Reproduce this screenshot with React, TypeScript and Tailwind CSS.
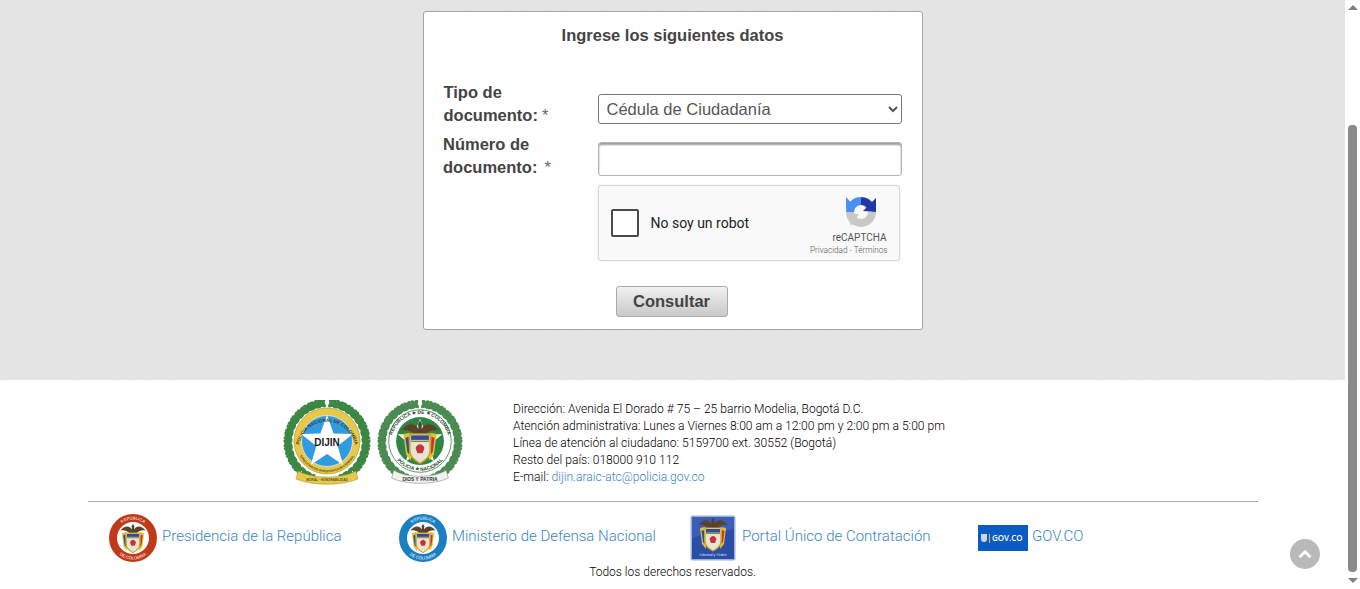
import { ChevronUp } from 'lucide-react';

const links = [
  { label: 'Presidencia de la República', logo: 'presidencia', gap: 'gap-[5px]' },
  { label: 'Ministerio de Defensa Nacional', logo: 'ministerio', gap: 'gap-[5px]' },
  { label: 'Portal Único de Contratación', logo: 'portal', gap: 'gap-[6px]' },
  { label: 'GOV.CO', logo: 'gov', gap: 'gap-[4px]' },
];

// Leaves running up both sides of an emblem
function Wreath({ color, berries }: { color: string; berries?: boolean }) {
  const angles = Array.from({ length: 15 }, (_, i) => 8 + i * 10.5);
  return (
    <g>
      <path d="M40 4 A38.5 38.5 0 0 0 17 70" fill="none" stroke={color} strokeWidth="5" />
      <path d="M48 4 A38.5 38.5 0 0 1 71 70" fill="none" stroke={color} strokeWidth="5" />
      {[1, -1].map((side) =>
        angles.map((a) => {
          const rad = (a * Math.PI) / 180;
          const x = 44 + side * 39 * Math.sin(rad);
          const y = 42 - 39 * Math.cos(rad);
          const rot = side * a;
          return (
            <g key={`${side}-${a}`}>
              <ellipse cx={x} cy={y} rx="2.5" ry="5.5" fill={color} transform={`rotate(${rot + side * 40} ${x} ${y})`} />
              <ellipse cx={x} cy={y} rx="2.5" ry="5.5" fill={color} transform={`rotate(${rot - side * 40} ${x} ${y})`} />
              {berries && Math.round(a * 2) % 3 === 0 && <circle cx={x} cy={y} r="1.3" fill="#b5354a" />}
            </g>
          );
        })
      )}
    </g>
  );
}

function Shield({ cx, cy, scale = 1 }: { cx: number; cy: number; scale?: number }) {
  return (
    <g transform={`translate(${cx} ${cy}) scale(${scale})`}>
      {/* flags */}
      <path d="M-13 -7 L-8 -8 L-7 14 L-11 9 Z" fill="#e5c02c" />
      <path d="M13 -7 L8 -8 L7 14 L11 9 Z" fill="#e5c02c" />
      <path d="M-11.5 -4 L-9 -5 L-8.5 9 L-10 7 Z" fill="#2f4f9e" />
      <path d="M11.5 -4 L9 -5 L8.5 9 L10 7 Z" fill="#c5343a" />
      {/* eagle */}
      <path d="M0 -9 C-3 -16 -9 -17 -15 -10 C-10 -11 -6 -9 -3 -6 L3 -6 C6 -9 10 -11 15 -10 C9 -17 3 -16 0 -9 Z" fill="#5f4128" />
      <path d="M-1.5 -15 L0 -18 L1.5 -15 L1 -8 H-1 Z" fill="#4a4438" />
      {/* shield */}
      <path d="M-8 -7 H8 V6 C8 11 4 14 0 16 C-4 14 -8 11 -8 6 Z" fill="#e8e4d4" stroke="#c9a21f" strokeWidth="1.2" />
      <rect x="-7" y="-6" width="14" height="5" fill="#2d4c9a" />
      <path d="M-3.5 4 C-2 0 2 0 3.5 4 L2 8 H-2 Z" fill="#c5343a" />
      <path d="M-7 -2 H7" stroke="#e5c02c" strokeWidth="1" />
    </g>
  );
}

function DijinEmblem() {
  return (
    <svg width="88" height="86" viewBox="0 0 88 86">
      <Wreath color="#3b8743" />
      <circle cx="44" cy="41" r="33" fill="#e6c84a" stroke="#a98c24" strokeWidth="0.6" />
      <circle cx="44" cy="41" r="25.5" fill="#2f9be0" stroke="#fff" strokeWidth="0.6" />
      <polygon points="44,15 50.6,33.5 70,34 54.7,46 60.2,65 44,54 27.8,65 33.3,46 18,34 37.4,33.5" fill="#fff" />
      <path id="dijin-top" d="M16 45 A28.5 28.5 0 0 1 72 45" fill="none" />
      <path id="dijin-bottom" d="M14 49 A31 31 0 0 0 74 49" fill="none" />
      <text fontSize="4.6" fontWeight="700" fill="#3b3a20" fontFamily="'Liberation Sans', sans-serif">
        <textPath href="#dijin-top" startOffset="50%" textAnchor="middle">POLICIA NACIONAL DE COLOMBIA</textPath>
      </text>
      <text fontSize="3.2" fontWeight="700" fill="#4a4722" fontFamily="'Liberation Sans', sans-serif">
        <textPath href="#dijin-bottom" startOffset="50%" textAnchor="middle">DIRECCION DE INVESTIGACION CRIMINAL</textPath>
      </text>
      <text x="44" y="45.5" textAnchor="middle" fontSize="10" fontWeight="700" fill="#1c1c1c" fontFamily="'Liberation Sans', sans-serif">DIJIN</text>
      <path d="M15 71 C30 79 58 79 73 71 L75 79 C58 86 30 86 13 79 Z" fill="#e6c84a" stroke="#a98c24" strokeWidth="0.5" />
      <text x="44" y="81" textAnchor="middle" fontSize="3.2" fontWeight="700" fill="#5a5526" fontFamily="'Liberation Sans', sans-serif">MORAL · HONORABILIDAD</text>
    </svg>
  );
}

function PoliciaEmblem() {
  return (
    <svg width="86" height="86" viewBox="0 0 88 86">
      <Wreath color="#4b8b52" berries />
      <circle cx="44" cy="41" r="32" fill="#fff" stroke="#3b7a45" strokeWidth="0.8" />
      <circle cx="44" cy="41" r="24.5" fill="#2f8644" />
      <polygon points="44,18 50,34 67,34 53.5,45 58.5,62 44,52 29.5,62 34.5,45 21,34 38,34" fill="#f4f2e6" />
      <path id="pol-top" d="M16 52 A29.5 29.5 0 1 1 72 52" fill="none" />
      <path id="pol-bottom" d="M13.5 41 A30.5 30.5 0 0 0 74.5 41" fill="none" />
      <text fontSize="5" fontWeight="700" fill="#26472f" fontFamily="'Liberation Sans', sans-serif">
        <textPath href="#pol-top" startOffset="50%" textAnchor="middle">REPÚBLICA ★ DE ★ COLOMBIA</textPath>
      </text>
      <text fontSize="5" fontWeight="700" fill="#26472f" fontFamily="'Liberation Sans', sans-serif">
        <textPath href="#pol-bottom" startOffset="50%" textAnchor="middle">POLICIA ★ NACIONAL</textPath>
      </text>
      <Shield cx={44} cy={43} scale={1.3} />
      <path d="M17 71 C30 79 58 79 71 71 L73 79 C58 86 30 86 15 79 Z" fill="#f2f2ee" stroke="#777" strokeWidth="0.5" />
      <text x="44" y="81.5" textAnchor="middle" fontSize="5" fontWeight="700" fill="#333" fontFamily="'Liberation Sans', sans-serif">DIOS Y PATRIA</text>
    </svg>
  );
}

function RingLogo({ id, color }: { id: string; color: string }) {
  return (
    <svg width="48" height="48" viewBox="0 0 48 48">
      <circle cx="24" cy="24" r="24" fill={color} />
      <circle cx="24" cy="24" r="16" fill="#fff" />
      <path id={`${id}-t`} d="M5.5 24 A18.5 18.5 0 0 1 42.5 24" fill="none" />
      <path id={`${id}-b`} d="M2.5 24 A21.5 21.5 0 0 0 45.5 24" fill="none" />
      <text fontSize="4.2" fontWeight="400" fill="#fff" fontFamily="'Liberation Sans', sans-serif">
        <textPath href={`#${id}-t`} startOffset="50%" textAnchor="middle">REPÚBLICA</textPath>
      </text>
      <text fontSize="4.2" fontWeight="400" fill="#fff" fontFamily="'Liberation Sans', sans-serif">
        <textPath href={`#${id}-b`} startOffset="50%" textAnchor="middle">DE COLOMBIA</textPath>
      </text>
      <Shield cx={24} cy={25} scale={0.85} />
    </svg>
  );
}

function PortalLogo() {
  return (
    <svg width="46" height="46" viewBox="0 0 46 46">
      <rect x="0.5" y="0.5" width="45" height="45" rx="2" fill="#9db0d6" />
      <rect x="2" y="2" width="42" height="42" fill="#2a4da6" />
      <path d="M2 2 H44 V14 C30 18 14 16 2 24 Z" fill="#3b5fb8" />
      <Shield cx={23} cy={20} scale={1} />
      <text x="23" y="41" textAnchor="middle" fontSize="3.6" fill="#dfe6f5" fontFamily="'Liberation Sans', sans-serif">Libertad y Orden</text>
    </svg>
  );
}

function GovLogo() {
  return (
    <div className="flex h-[26px] w-[50px] items-center gap-[2px] bg-[#0a5bc4] pl-[3px] text-[8px] font-semibold text-white">
      <span className="h-[8px] w-[6px] rounded-b-[3px] bg-[#c9d6ea]" />
      <span className="h-[9px] w-px bg-[#e8b04a]" />
      <span className="leading-none font-['Open_Sans',sans-serif]">GOV.CO</span>
    </div>
  );
}

function RecaptchaLogo() {
  return (
    <svg width="32" height="32" viewBox="0 0 32 32">
      <path d="M16 5 A11 11 0 0 0 5 16" fill="none" stroke="#4a90f2" strokeWidth="8" />
      <path d="M16 5 A11 11 0 0 1 25 10" fill="none" stroke="#2338a8" strokeWidth="8" />
      <polygon points="31,2 31,16 18,15" fill="#2338a8" />
      <polygon points="1,1 1,13 9,10" fill="#4a90f2" />
      <path d="M5 16 A11 11 0 0 0 27 16" fill="none" stroke="#c8c8c8" strokeWidth="8" />
      <polygon points="2,18 14,18 6,30" fill="#c8c8c8" />
    </svg>
  );
}

function LinkLogo({ logo }: { logo: string }) {
  if (logo === 'presidencia') return <RingLogo id="pres" color="#c0391b" />;
  if (logo === 'ministerio') return <RingLogo id="mini" color="#1b7fc4" />;
  if (logo === 'portal') return <PortalLogo />;
  return <GovLogo />;
}

function Scrollbar() {
  return (
    <div className="flex h-[589px] w-[15px] shrink-0 flex-col items-center bg-white">
      <div className="mt-[5px] h-0 w-0 border-x-[5px] border-b-[5px] border-x-transparent border-b-[#7f7f7f]" />
      <div className="mt-[115px] h-[447px] w-[9px] rounded-[4px] bg-[#8a8a8a]" />
      <div className="mt-[6px] h-0 w-0 border-x-[5px] border-t-[5px] border-x-transparent border-t-[#7f7f7f]" />
    </div>
  );
}

export default function App() {
  return (
    <div className="flex h-[589px] overflow-hidden bg-white font-['Liberation_Sans',Arial,sans-serif]">
      <div className="relative min-w-0 flex-1">
        {/* Form section */}
        <section className="flex h-[380px] justify-center bg-[#e4e4e4] bg-[repeating-linear-gradient(135deg,#e3e3e3_0,#e3e3e3_2px,#e5e5e5_2px,#e5e5e5_4px)] pt-[11px]">
          <form className="h-[319px] w-[500px] rounded-[3px] border border-[#a3a3a3] bg-white pt-[12px] text-[#444]">
            <h2 className="text-center text-[16.5px] leading-[22px] font-bold">Ingrese los siguientes datos</h2>

            <div className="mt-[35px] flex h-[52px] pl-[20px]">
              <label className="w-[154px] text-[16.5px] leading-[23px] font-bold">
                Tipo de
                <br />
                documento:<span className="ml-[4px] font-normal text-[#666]">*</span>
              </label>
              <select className="mt-[13px] h-[30px] w-[304px] rounded-[3px] border border-[#767676] bg-white pl-[4px] text-[16.5px] text-[#555]">
                <option>Cédula de Ciudadanía</option>
              </select>
            </div>

            <div className="flex h-[52px] pl-[19.5px]">
              <label className="w-[154.5px] text-[16.5px] leading-[23px] font-bold">
                Número de
                <br />
                documento:<span className="ml-[7px] font-normal text-[#666]">*</span>
              </label>
              <input
                type="text"
                className="mt-[9px] h-[34px] w-[304px] rounded-[3px] border border-[#b5b5b5] bg-white shadow-[inset_0_2px_2px_rgba(0,0,0,0.4)]"
              />
            </div>

            {/* reCAPTCHA */}
            <div className="ml-[174px] flex h-[76px] w-[302px] items-center rounded-[3px] border border-[#d6d6d6] bg-[#f9f9f9] pl-[12px] shadow-[0_0_3px_rgba(0,0,0,0.08)] font-['Roboto',sans-serif]">
              <div className="h-[28px] w-[28px] rounded-[2px] border-2 border-[#4a4a4a] bg-white" />
              <span className="ml-[12px] text-[14px] text-[#222]">No soy un robot</span>
              <div className="mt-[6px] ml-auto flex flex-col items-end pr-[11px] text-[#555]">
                <div className="mr-[11px] h-[32px] w-[32px]">
                  <RecaptchaLogo />
                </div>
                <span className="mt-[4px] mr-px text-[10px] leading-[12px]">reCAPTCHA</span>
                <span className="text-[8.2px] leading-[12px] font-light whitespace-nowrap">Privacidad - Términos</span>
              </div>
            </div>

            <button
              type="button"
              className="mt-[25px] ml-[192px] h-[31px] w-[112px] rounded-[3px] border border-[#aaa] bg-gradient-to-b from-[#f1f1f1] to-[#c9c9c9] text-[16.5px] font-bold text-[#444]"
            >
              Consultar
            </button>
          </form>
        </section>

        {/* Footer */}
        <footer className="font-['Roboto',sans-serif]">
          <div className="flex pt-[20px] pl-[283px]">
            <DijinEmblem />
            <div className="ml-[6px]">
              <PoliciaEmblem />
            </div>
            <div className="mt-[1px] ml-[50px] text-[12.1px] leading-[17px] font-light text-black">
              <p>Dirección: Avenida El Dorado # 75 – 25 barrio Modelia, Bogotá D.C.</p>
              <p>Atención administrativa: Lunes a Viernes 8:00 am a 12:00 pm y 2:00 pm a 5:00 pm</p>
              <p>Línea de atención al ciudadano: 5159700 ext. 30552 (Bogotá)</p>
              <p>Resto del país: 018000 910 112</p>
              <p>
                E-mail: <a className="text-[#3a85c6]">dijin.araic-atc@policia.gov.co</a>
              </p>
            </div>
          </div>

          <div className="mt-[15px] ml-[88px] w-[1170px] border-t border-[#aaa]" />

          <div className="mt-[11px] ml-[109px] grid h-[50px] grid-cols-[290px_291px_288px_1fr] items-center">
            {links.map((link) => (
              <a key={link.label} className={`flex items-center text-[15px] font-light text-[#3a85c6] ${link.gap}`}>
                <LinkLogo logo={link.logo} />
                <span className="mb-[4px] whitespace-nowrap">{link.label}</span>
              </a>
            ))}
          </div>

          <p className="mt-[1px] text-center text-[12px] leading-[17px] font-light text-black">Todos los derechos reservados.</p>
        </footer>

        {/* Back to top */}
        <button className="absolute top-[539px] left-[1290px] flex h-[30px] w-[30px] items-center justify-center rounded-full bg-[#b9b9b9] text-white">
          <ChevronUp size={18} strokeWidth={4} />
        </button>
      </div>
      <Scrollbar />
    </div>
  );
}
